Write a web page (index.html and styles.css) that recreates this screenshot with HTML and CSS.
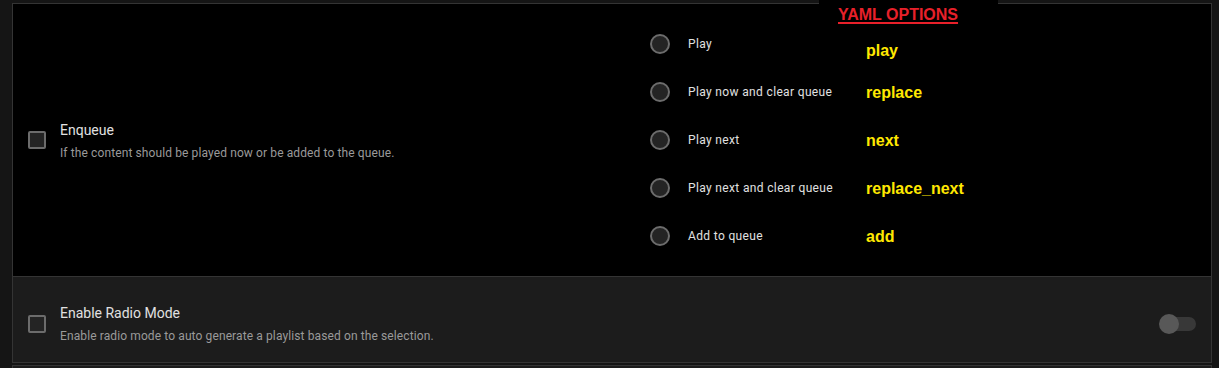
FILE: index.html
```html
<!DOCTYPE html>
<html lang="en">
<head>
  <meta charset="UTF-8">
  <title>Media player options</title>
  <meta name="viewport" content="width=device-width, initial-scale=1.0">
  <link rel="stylesheet" href="styles.css">
</head>
<body>
  <div class="page">
    <div class="card">

      <!-- Enqueue -->
      <div class="row row-dark">
        <div class="row-main">
          <span class="checkbox"></span>
          <div class="row-text">
            <div class="row-title">Enqueue</div>
            <div class="row-desc">If the content should be played now or be added to the queue.</div>
          </div>
        </div>
        <ul class="options">
          <li class="option">
            <span class="radio"></span>
            <span class="option-label">Play</span>
            <span class="yaml yaml-first">play</span>
          </li>
          <li class="option">
            <span class="radio"></span>
            <span class="option-label">Play now and clear queue</span>
            <span class="yaml">replace</span>
          </li>
          <li class="option">
            <span class="radio"></span>
            <span class="option-label">Play next</span>
            <span class="yaml">next</span>
          </li>
          <li class="option">
            <span class="radio"></span>
            <span class="option-label">Play next and clear queue</span>
            <span class="yaml">replace_next</span>
          </li>
          <li class="option">
            <span class="radio"></span>
            <span class="option-label">Add to queue</span>
            <span class="yaml">add</span>
          </li>
        </ul>
      </div>

      <!-- Radio mode -->
      <div class="row row-grey">
        <div class="row-main">
          <span class="checkbox"></span>
          <div class="row-text">
            <div class="row-title">Enable Radio Mode</div>
            <div class="row-desc">Enable radio mode to auto generate a playlist based on the selection.</div>
          </div>
        </div>
        <span class="toggle"><span class="toggle-knob"></span></span>
      </div>
    </div>

    <div class="card card-next"></div>

    <div class="yaml-tag"><span>YAML OPTIONS</span></div>
  </div>
</body>
</html>
```

FILE: styles.css
```css
:root {
  --outer-bg: #151515;
  --row-dark: #000000;
  --row-grey: #1c1c1c;
  --border: #343434;
  --text: #e1e1e1;
  --text-muted: #9a9a9a;
  --control-border: #6c6c6c;
  --control-fill: #242424;
  --yaml-yellow: #ffe800;
  --yaml-red: #e8202a;
}

* {
  margin: 0;
  padding: 0;
  box-sizing: border-box;
}

body {
  background: var(--outer-bg);
  font-family: Roboto, "Noto Sans", sans-serif;
  color: var(--text);
  overflow: hidden;
}

.page {
  position: relative;
  padding: 3px 7px 0 12px;
}

.card {
  border: 1px solid var(--border);
}

.card-next {
  margin-top: 2px;
  height: 20px;
  border-bottom: none;
  background: var(--row-grey);
}

/* Rows */
.row {
  display: flex;
  align-items: center;
}

.row-dark {
  background: var(--row-dark);
  border-bottom: 1px solid var(--border);
}

.row-grey {
  background: var(--row-grey);
  padding: 26px 15px 18px 0;
}

.row-main {
  flex: 0 0 627px;
  display: flex;
  align-items: center;
  gap: 14px;
  padding-left: 15px;
}

.row-grey .row-main {
  flex: 1;
}

.checkbox {
  width: 18px;
  height: 18px;
  border: 2px solid var(--control-border);
  border-radius: 2px;
  background: var(--control-fill);
  flex-shrink: 0;
}

.row-title {
  font-size: 14px;
  line-height: 20px;
  color: var(--text);
}

.row-desc {
  margin-top: 5px;
  font-size: 12px;
  line-height: 16px;
  letter-spacing: 0.11px;
  color: var(--text-muted);
}

/* Options list */
.options {
  list-style: none;
  padding: 16px 0;
}

.option {
  height: 48px;
  display: flex;
  align-items: center;
}

.radio {
  width: 20px;
  height: 20px;
  margin: 0 10px;
  border: 2px solid var(--control-border);
  border-radius: 50%;
  background: var(--control-fill);
  flex-shrink: 0;
}

.option-label {
  width: 178px;
  margin-left: 8px;
  font-size: 12px;
  letter-spacing: 0.35px;
  color: var(--text);
}

.yaml {
  font-family: "Liberation Sans", Arial, sans-serif;
  font-weight: bold;
  font-size: 16px;
  color: var(--yaml-yellow);
  padding-top: 1px;
}

.yaml-first {
  padding-top: 13px;
}

/* Toggle */
.toggle {
  position: relative;
  width: 35px;
  height: 14px;
  border-radius: 7px;
  background: #383838;
  flex-shrink: 0;
}

.toggle-knob {
  position: absolute;
  left: -2px;
  top: -3px;
  width: 20px;
  height: 20px;
  border-radius: 50%;
  background: #585858;
}

/* Annotation laid over the card */
.yaml-tag {
  position: absolute;
  top: 0;
  left: 819px;
  width: 179px;
  height: 26px;
  background: #000;
  padding: 5px 0 0 19px;
}

.yaml-tag span {
  font-family: "Liberation Sans", Arial, sans-serif;
  font-weight: bold;
  font-size: 16px;
  color: var(--yaml-red);
  text-decoration: underline;
  text-decoration-thickness: 2px;
  text-underline-offset: 2px;
}
```
